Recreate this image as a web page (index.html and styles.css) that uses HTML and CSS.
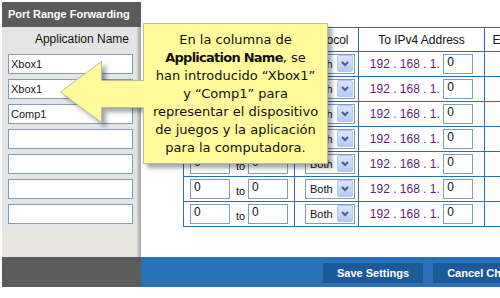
FILE: index.html
```html
<!DOCTYPE html>
<html lang="es">
  <head>
    <meta charset="utf-8">
    <meta name="viewport" content="width=device-width">
    <title>Port Range Forwarding</title>
    <link rel="stylesheet" href="styles.css">
  </head>

<body>
    <div class="page">
      <!-- fixed first column -->
      <div class="side">
        <div class="side-title">Port Range Forwarding</div>
        <div class="side-list">
          <div class="side-head">Application Name</div>
          <input class="app" type="text" value="Xbox1">
          <input class="app" type="text" value="Xbox1">
          <input class="app" type="text" value="Comp1">
          <input class="app" type="text" value="">
          <input class="app" type="text" value="">
          <input class="app" type="text" value="">
          <input class="app" type="text" value="">
        </div>
      </div>

      <div class="content">
        <table class="ports">
          <colgroup>
            <col class="w-range">
            <col class="w-proto">
            <col class="w-ip">
            <col class="w-on">
          </colgroup>
          <tr>
            <th>Start ~ End Port</th>
            <th>Protocol</th>
            <th>To IPv4 Address</th>
            <th>Enabled</th>
          </tr>
          <tr>
            <td><input class="port" value="0"><span class="to">to</span><input class="port" value="0"></td>
            <td class="cell-proto"><span class="proto"><select><option>Both</option><option>TCP</option><option>UDP</option></select><span class="drop"><svg width="8" height="6" viewBox="0 0 8 6"><path d="M1 1 L4 4 L7 1" fill="none" stroke="#4a5f86" stroke-width="2"/></svg></span></span></td>
            <td><span class="ip">192 . 168 . 1.</span> <input class="port oct" value="0"></td>
            <td><input type="checkbox"></td>
          </tr>
          <tr>
            <td><input class="port" value="0"><span class="to">to</span><input class="port" value="0"></td>
            <td class="cell-proto"><span class="proto"><select><option>Both</option><option>TCP</option><option>UDP</option></select><span class="drop"><svg width="8" height="6" viewBox="0 0 8 6"><path d="M1 1 L4 4 L7 1" fill="none" stroke="#4a5f86" stroke-width="2"/></svg></span></span></td>
            <td><span class="ip">192 . 168 . 1.</span> <input class="port oct" value="0"></td>
            <td><input type="checkbox"></td>
          </tr>
          <tr>
            <td><input class="port" value="0"><span class="to">to</span><input class="port" value="0"></td>
            <td class="cell-proto"><span class="proto"><select><option>Both</option><option>TCP</option><option>UDP</option></select><span class="drop"><svg width="8" height="6" viewBox="0 0 8 6"><path d="M1 1 L4 4 L7 1" fill="none" stroke="#4a5f86" stroke-width="2"/></svg></span></span></td>
            <td><span class="ip">192 . 168 . 1.</span> <input class="port oct" value="0"></td>
            <td><input type="checkbox"></td>
          </tr>
          <tr>
            <td><input class="port" value="0"><span class="to">to</span><input class="port" value="0"></td>
            <td class="cell-proto"><span class="proto"><select><option>Both</option><option>TCP</option><option>UDP</option></select><span class="drop"><svg width="8" height="6" viewBox="0 0 8 6"><path d="M1 1 L4 4 L7 1" fill="none" stroke="#4a5f86" stroke-width="2"/></svg></span></span></td>
            <td><span class="ip">192 . 168 . 1.</span> <input class="port oct" value="0"></td>
            <td><input type="checkbox"></td>
          </tr>
          <tr>
            <td><input class="port" value="0"><span class="to">to</span><input class="port" value="0"></td>
            <td class="cell-proto"><span class="proto"><select><option>Both</option><option>TCP</option><option>UDP</option></select><span class="drop"><svg width="8" height="6" viewBox="0 0 8 6"><path d="M1 1 L4 4 L7 1" fill="none" stroke="#4a5f86" stroke-width="2"/></svg></span></span></td>
            <td><span class="ip">192 . 168 . 1.</span> <input class="port oct" value="0"></td>
            <td><input type="checkbox"></td>
          </tr>
          <tr>
            <td><input class="port" value="0"><span class="to">to</span><input class="port" value="0"></td>
            <td class="cell-proto"><span class="proto"><select><option>Both</option><option>TCP</option><option>UDP</option></select><span class="drop"><svg width="8" height="6" viewBox="0 0 8 6"><path d="M1 1 L4 4 L7 1" fill="none" stroke="#4a5f86" stroke-width="2"/></svg></span></span></td>
            <td><span class="ip">192 . 168 . 1.</span> <input class="port oct" value="0"></td>
            <td><input type="checkbox"></td>
          </tr>
          <tr>
            <td><input class="port" value="0"><span class="to">to</span><input class="port" value="0"></td>
            <td class="cell-proto"><span class="proto"><select><option>Both</option><option>TCP</option><option>UDP</option></select><span class="drop"><svg width="8" height="6" viewBox="0 0 8 6"><path d="M1 1 L4 4 L7 1" fill="none" stroke="#4a5f86" stroke-width="2"/></svg></span></span></td>
            <td><span class="ip">192 . 168 . 1.</span> <input class="port oct" value="0"></td>
            <td><input type="checkbox"></td>
          </tr>
        </table>
      </div>

      <div class="side-foot"></div>
      <div class="actions">
        <button type="button">Save Settings</button>
        <button type="button">Cancel Changes</button>
      </div>
    </div>

    <!-- tutorial callout drawn over the page -->
    <div class="callout">
      <svg class="callout-shape" width="500" height="298" viewBox="0 0 500 298">
        <polygon points="143.5,23.5 327.5,23.5 327.5,163.5 143.5,163.5 143.5,107.5 101.5,107.5 101.5,122.5 60.5,92 101.5,61.5 101.5,80.5 143.5,80.5" fill="#fffb9c" stroke="#b9b9a6" stroke-width="1"/>
      </svg>
      <div class="callout-text">
        En la columna de<br>
        <strong>Application Name</strong>, se<br>
        han introducido “Xbox1”<br>
        y “Comp1” para<br>
        representar el dispositivo<br>
        de juegos y la aplicación<br>
        para la computadora.
      </div>
    </div>
</body>

</html>
```

FILE: styles.css
```css
* {
  box-sizing: border-box;
}

body {
  margin: 0;
  font-family: "Liberation Sans", Arial, sans-serif;
  color: #111;
  background: #fff;
}

.page {
  display: grid;
  grid-template-columns: 139px 359px;
  grid-template-rows: 255px 30px;
  margin: 2px 0 0 2px;
}

/* left column */
.side {
  display: flex;
  flex-direction: column;
  padding-right: 4px;
  background: linear-gradient(to right, #d2d2d2, #a3a3a3) right / 4px 100% no-repeat, #e6e5df;
}

.side-title {
  height: 25px;
  margin-right: -4px;
  padding-left: 6px;
  background: #5b5b5b;
  color: #fff;
  font-size: 11px;
  font-weight: bold;
  line-height: 25px;
  white-space: nowrap;
}

.side-list {
  display: flex;
  flex-direction: column;
  gap: 5px;
  padding: 0 4px 3px 6px;
  background: #e4e4e4;
}

.side-head {
  height: 24px;
  margin-bottom: -2px;
  padding-right: 4px;
  font-size: 12px;
  line-height: 24px;
  text-align: right;
  white-space: nowrap;
}

.app {
  width: 125px;
  height: 20px;
  margin: 0;
  padding: 0 2px;
  border: 1px solid #7f9db9;
  background: #fff;
  color: #1a1a1a;
  font-family: inherit;
  font-size: 11px;
  outline: none;
}

/* table */
.content {
  overflow: hidden;
  padding: 25px 0 0 42px;
  background: #fff;
}

.ports {
  width: 361px;
  border-collapse: collapse;
  table-layout: fixed;
  font-size: 12px;
}

.w-range { width: 111px; }
.w-proto { width: 64px; }
.w-ip { width: 126px; }
.w-on { width: 60px; }

.ports th {
  height: 24px;
  padding: 0;
  border: 1px solid #2b6db4;
  font-weight: normal;
  white-space: nowrap;
  overflow: hidden;
}

.ports td {
  height: 25px;
  padding: 0;
  border: 1px solid #2b6db4;
  text-align: center;
  vertical-align: middle;
  white-space: nowrap;
}

.port {
  width: 40px;
  height: 20px;
  margin: 0;
  padding: 0 3px 4px;
  border: 1px solid #7f9db9;
  background: #fff;
  color: #111;
  font-family: inherit;
  font-size: 12px;
  vertical-align: middle;
  outline: none;
}

.port.oct {
  width: 30px;
}

.to {
  position: relative;
  top: 2px;
  margin: 0 3px 0 6px;
  font-size: 11px;
  vertical-align: middle;
}

.ip {
  color: #621e6e;
  vertical-align: middle;
}

.ports td.cell-proto {
  padding-left: 10px;
  text-align: left;
}

.proto {
  position: relative;
  display: inline-block;
  width: 50px;
  height: 20px;
  vertical-align: middle;
}

.proto select {
  appearance: none;
  width: 50px;
  height: 20px;
  margin: 0;
  padding: 0 0 0 4px;
  border: 1px solid #7f9db9;
  border-radius: 0;
  background: #fff;
  color: #111;
  font-family: inherit;
  font-size: 11px;
  outline: none;
}

.drop {
  position: absolute;
  top: 1px;
  right: 2px;
  width: 16px;
  height: 17px;
  display: flex;
  align-items: center;
  justify-content: center;
  border: 1px solid #b3c6ef;
  border-radius: 2px;
  background: linear-gradient(#dce6fd, #b4c8f6);
}

/* bottom bar */
.side-foot {
  background: #5c5c5c;
}

.actions {
  display: flex;
  align-items: flex-start;
  gap: 10px;
  padding: 6px 0 0 182px;
  overflow: hidden;
  background: #2a71b8;
}

.actions button {
  flex-shrink: 0;
  height: 20px;
  padding: 0 14px;
  border: none;
  background: #1b5a97;
  color: #fff;
  font-family: inherit;
  font-size: 11px;
  font-weight: bold;
  white-space: nowrap;
}

/* callout */
.callout {
  position: absolute;
  left: 0;
  top: 0;
  width: 500px;
  height: 298px;
  pointer-events: none;
}

.callout-shape {
  display: block;
  filter: drop-shadow(4px 4px 2px rgba(0, 0, 0, 0.35));
}

.callout-text {
  position: absolute;
  left: 143px;
  top: 24px;
  width: 185px;
  padding-top: 7px;
  color: #111;
  font-family: "DejaVu Sans", sans-serif;
  font-size: 13px;
  line-height: 18px;
  text-align: center;
  white-space: nowrap;
}

.callout-text strong {
  letter-spacing: -0.75px;
}
```
